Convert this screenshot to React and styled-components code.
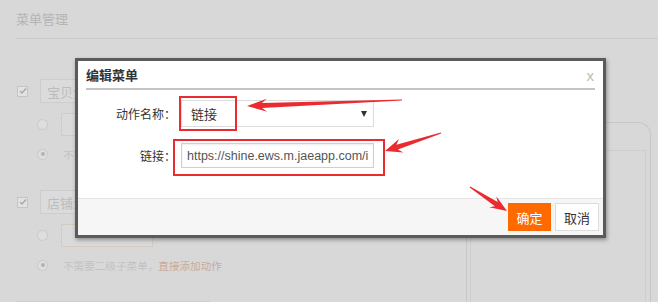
import React from 'react'
import styled, { createGlobalStyle } from 'styled-components'

const GlobalStyle = createGlobalStyle`
    html, body {
        margin: 0;
        padding: 0;
        background: #d8d8d8;
    }
    body {
        font-family: "Liberation Sans", "Noto Sans CJK SC", sans-serif;
    }
`;

const Root = styled.div`
    position: relative;
    width: 658px;
    height: 302px;
    overflow: hidden;
    background: #d8d8d8;
`;
const Header = styled.div`
    margin-left: 16px;
    height: 38px;
    border-bottom: 1px solid #cbcbcb;
    display: flex;
    align-items: center;
`;
const Title = styled.h2`
    margin: 0;
    font-size: 13px;
    font-weight: normal;
    color: #b4b4b4;
    padding-bottom: 2px;
`;
const Main = styled.div`
    display: flex;
    padding-left: 16px;
`;
const MenuColumn = styled.div`
    width: 450px;
    padding-top: 40px;
    display: flex;
    flex-direction: column;
    gap: 27px;
`;
const MenuGroup = styled.div`
    display: flex;
    flex-direction: column;
`;
const ItemRow = styled.div`
    display: flex;
    align-items: center;
    height: 24px;
    gap: 12px;
    padding-left: 1px;
`;
const SubRow = styled.div`
    display: flex;
    align-items: center;
    gap: ${p => p.$gap || 13}px;
    padding-left: 21px;
    height: ${p => p.$h || 18}px;
    margin-top: ${p => p.$mt || 9}px;
`;
const CheckBox = styled.span`
    width: 9px;
    height: 9px;
    border: 1px solid #c4c4c4;
    background: #e2e2e2;
    display: flex;
    align-items: center;
    justify-content: center;
`;
const Radio = styled.span`
    width: 9px;
    height: 9px;
    border-radius: 50%;
    border: 1px solid #c9c9c9;
    background: #dedede;
    display: flex;
    align-items: center;
    justify-content: center;
    &::after {
        content: '';
        width: 4px;
        height: 4px;
        border-radius: 50%;
        background: ${p => (p.$on ? '#b3b3b3' : 'transparent')};
    }
`;
const NameInput = styled.div`
    width: ${p => p.$w || 220}px;
    height: 24px;
    box-sizing: border-box;
    border: 1px solid #cdcdcd;
    background: #dbdbdb;
    color: #bcbcbc;
    font-size: 13px;
    padding-left: 6px;
    display: flex;
    align-items: center;
`;
const SubInput = styled.div`
    width: 92px;
    height: 23px;
    box-sizing: border-box;
    border: 1px solid #d4cbc3;
    background: #dadada;
`;
const Hint = styled.span`
    font-size: 10.6px;
    color: #c3c3c3;
    white-space: nowrap;
`;
const HintLink = styled.span`
    color: #c8ab9a;
`;
const Phone = styled.div`
    margin-top: 83px;
    width: 185px;
    height: 200px;
    box-sizing: border-box;
    border: 1px solid #c7c7c7;
    border-bottom: none;
    border-radius: 13px 13px 0 0;
    padding: 27px 4px 0 3px;
    display: flex;
`;
const PhoneScreen = styled.div`
    flex: 1;
    border: 1px solid #cdcdcd;
    border-bottom: none;
`;

const Modal = styled.div`
    position: absolute;
    left: 75px;
    top: 58px;
    width: 531px;
    height: 180px;
    box-sizing: border-box;
    border: 3px solid #5b5b5b;
    background: #fff;
    box-shadow: 1px 2px 4px rgba(0, 0, 0, 0.35);
    display: flex;
    flex-direction: column;
`;
const ModalHeader = styled.div`
    margin: 0 8px;
    height: 27px;
    border-bottom: 2px solid #c4c4c4;
    display: flex;
    align-items: center;
    justify-content: space-between;
`;
const ModalTitle = styled.span`
    font-size: 13px;
    font-weight: bold;
    color: #333;
`;
const Close = styled.span`
    font-family: "Liberation Sans", sans-serif;
    font-size: 15px;
    color: #bdbdbd;
    padding: 2px 1px 0 0;
`;
const ModalBody = styled.div`
    flex: 1;
    padding-top: 10px;
    display: flex;
    flex-direction: column;
    gap: 16px;
`;
const FormRow = styled.div`
    display: flex;
    align-items: center;
`;
const FieldLabel = styled.label`
    width: 98px;
    text-align: right;
    font-size: 12px;
    color: #333;
    margin-right: 5px;
`;
const Select = styled.div`
    width: 193px;
    height: 27px;
    box-sizing: border-box;
    border: 1px solid #dcdcdc;
    padding: 0 6px 0 9px;
    display: flex;
    align-items: center;
    justify-content: space-between;
    font-size: 13px;
    color: #333;
`;
const Caret = styled.span`
    width: 0;
    height: 0;
    border-left: 3px solid transparent;
    border-right: 3px solid transparent;
    border-top: 6px solid #333;
`;
const TextInput = styled.div`
    width: 193px;
    height: 25px;
    box-sizing: border-box;
    border: 1px solid #cfcfcf;
    box-shadow: inset 0 1px 2px rgba(0, 0, 0, 0.08);
    padding-left: 5px;
    display: flex;
    align-items: center;
    overflow: hidden;
    white-space: nowrap;
    font-family: "Liberation Sans", sans-serif;
    font-size: 12.5px;
    color: #555;
`;
const ModalFooter = styled.div`
    height: 37px;
    box-sizing: border-box;
    border-top: 1px solid #e6e6e6;
    background: #f6f6f6;
    display: flex;
    justify-content: flex-end;
    align-items: flex-start;
    padding: 4px 4px 0 0;
    gap: 4px;
`;
const Button = styled.button`
    height: 28px;
    width: ${p => (p.$primary ? 43 : 44)}px;
    box-sizing: border-box;
    border: 1px solid ${p => (p.$primary ? '#ff6a00' : '#dcdcdc')};
    background: ${p => (p.$primary ? '#ff6a00' : '#fff')};
    color: ${p => (p.$primary ? '#fff' : '#333')};
    font-family: "Liberation Sans", "Noto Sans CJK SC", sans-serif;
    font-size: 13px;
    padding: 0;
`;
const Annotations = styled.svg`
    position: absolute;
    left: 0;
    top: 0;
    pointer-events: none;
`;

// tapered arrow from tail (tx,ty) to tip (px,py)
const arrow = (tx, ty, px, py, headL = 16, headW = 13, shaftW = 5, tailW = 1) => {
  const L = Math.hypot(px - tx, py - ty);
  const dx = (px - tx) / L;
  const dy = (py - ty) / L;
  const nx = -dy;
  const ny = dx;
  const pt = (x, y) => `${x.toFixed(1)},${y.toFixed(1)}`;
  const sx = px - dx * headL * 0.75;
  const sy = py - dy * headL * 0.75;
  const bx = px - dx * headL;
  const by = py - dy * headL;
  return [
    pt(tx + nx * tailW / 2, ty + ny * tailW / 2),
    pt(sx + nx * shaftW / 2, sy + ny * shaftW / 2),
    pt(bx + nx * headW / 2, by + ny * headW / 2),
    pt(px, py),
    pt(bx - nx * headW / 2, by - ny * headW / 2),
    pt(sx - nx * shaftW / 2, sy - ny * shaftW / 2),
    pt(tx - nx * tailW / 2, ty - ny * tailW / 2),
  ].join(' ');
};

const Check = () => (
  <svg width="8" height="8" viewBox="0 0 8 8">
    <path d="M1 4 L3 6 L7 1.5" fill="none" stroke="#a8a8a8" strokeWidth="1.4" />
  </svg>
);

const groups = ['宝贝分类', '店铺活动'];

const App = () => {
  return (
    <Root>
      <GlobalStyle />
      <Header>
        <Title>菜单管理</Title>
      </Header>
      <Main>
        <MenuColumn>
          {groups.map(name => (
            <MenuGroup key={name}>
              <ItemRow>
                <CheckBox><Check /></CheckBox>
                <NameInput>{name}</NameInput>
              </ItemRow>
              <SubRow $h={23} $mt={10}>
                <Radio />
                <SubInput />
              </SubRow>
              <SubRow $gap={15}>
                <Radio $on />
                <Hint>不需要二级子菜单，<HintLink>直接添加动作</HintLink></Hint>
              </SubRow>
            </MenuGroup>
          ))}
          <NameInput $w={194} />
        </MenuColumn>
        <Phone>
          <PhoneScreen />
        </Phone>
      </Main>

      <Modal>
        <ModalHeader>
          <ModalTitle>编辑菜单</ModalTitle>
          <Close>x</Close>
        </ModalHeader>
        <ModalBody>
          <FormRow>
            <FieldLabel>动作名称：</FieldLabel>
            <Select>
              <span>链接</span>
              <Caret />
            </Select>
          </FormRow>
          <FormRow>
            <FieldLabel>链接：</FieldLabel>
            <TextInput>https://shine.ews.m.jaeapp.com/i</TextInput>
          </FormRow>
        </ModalBody>
        <ModalFooter>
          <Button $primary>确定</Button>
          <Button>取消</Button>
        </ModalFooter>
      </Modal>

      <Annotations width="658" height="302">
        <rect x="180" y="97" width="56" height="33" fill="none" stroke="#ea2b30" strokeWidth="2" />
        <rect x="174" y="140" width="210" height="35" fill="none" stroke="#ea2b30" strokeWidth="2" />
        <polygon points={arrow(402, 100, 247, 106, 20, 13, 5, 1)} fill="#ea2b30" />
        <polygon points={arrow(441, 133, 385, 151, 17, 14, 5, 1)} fill="#ea2b30" />
        <polygon points={arrow(470, 187, 507, 211, 17, 13, 5, 1)} fill="#ea2b30" />
      </Annotations>
    </Root>
  )
}

export default App
